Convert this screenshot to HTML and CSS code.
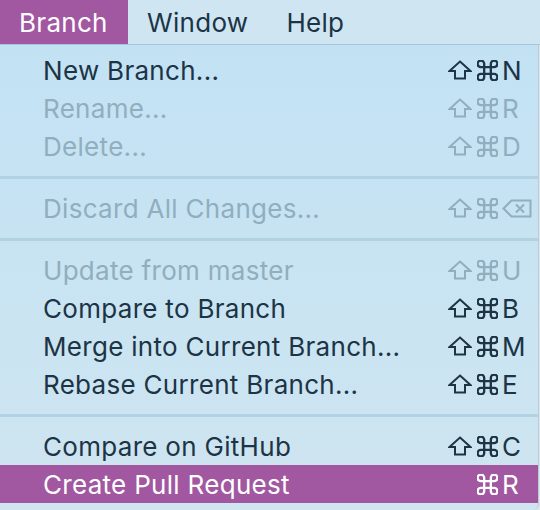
FILE: index.html
```html
<!DOCTYPE html>
<html>
<head>
<meta charset="utf-8">
<link rel="stylesheet" href="styles.css">
</head>
<body>
<div class="screen">
  <div class="menubar">
    <div class="title active">Branch</div>
    <div class="title">Window</div>
    <div class="title">Help</div>
  </div>
  <div class="menu">
    <div class="item">
      <span class="label">New Branch...</span>
      <span class="mods"><svg class="shift" viewBox="0 0 24 20"><path d="M12 1.5 L22.5 11 H17 V18.5 H7 V11 H1.5 Z"/></svg><svg class="cmd" viewBox="2.5 2.5 19 19"><path d="M15 6v12a3 3 0 1 0 3-3H6a3 3 0 1 0 3 3V6a3 3 0 1 0-3 3h12a3 3 0 1 0-3-3"/></svg></span>
      <span class="key">N</span>
    </div>
    <div class="item disabled">
      <span class="label">Rename...</span>
      <span class="mods"><svg class="shift" viewBox="0 0 24 20"><path d="M12 1.5 L22.5 11 H17 V18.5 H7 V11 H1.5 Z"/></svg><svg class="cmd" viewBox="2.5 2.5 19 19"><path d="M15 6v12a3 3 0 1 0 3-3H6a3 3 0 1 0 3 3V6a3 3 0 1 0-3 3h12a3 3 0 1 0-3-3"/></svg></span>
      <span class="key">R</span>
    </div>
    <div class="item disabled">
      <span class="label">Delete...</span>
      <span class="mods"><svg class="shift" viewBox="0 0 24 20"><path d="M12 1.5 L22.5 11 H17 V18.5 H7 V11 H1.5 Z"/></svg><svg class="cmd" viewBox="2.5 2.5 19 19"><path d="M15 6v12a3 3 0 1 0 3-3H6a3 3 0 1 0 3 3V6a3 3 0 1 0-3 3h12a3 3 0 1 0-3-3"/></svg></span>
      <span class="key">D</span>
    </div>
    <div class="sep"></div>
    <div class="item disabled">
      <span class="label">Discard All Changes...</span>
      <span class="mods"><svg class="shift" viewBox="0 0 24 20"><path d="M12 1.5 L22.5 11 H17 V18.5 H7 V11 H1.5 Z"/></svg><svg class="cmd" viewBox="2.5 2.5 19 19"><path d="M15 6v12a3 3 0 1 0 3-3H6a3 3 0 1 0 3 3V6a3 3 0 1 0-3 3h12a3 3 0 1 0-3-3"/></svg></span>
      <span class="key"><svg class="del" viewBox="0 0 30 19"><path d="M1.5 9.5 L9.5 1.5 H28.5 V17.5 H9.5 Z M14 5.5 L22 13.5 M22 5.5 L14 13.5"/></svg></span>
    </div>
    <div class="sep"></div>
    <div class="item disabled">
      <span class="label">Update from master</span>
      <span class="mods"><svg class="shift" viewBox="0 0 24 20"><path d="M12 1.5 L22.5 11 H17 V18.5 H7 V11 H1.5 Z"/></svg><svg class="cmd" viewBox="2.5 2.5 19 19"><path d="M15 6v12a3 3 0 1 0 3-3H6a3 3 0 1 0 3 3V6a3 3 0 1 0-3 3h12a3 3 0 1 0-3-3"/></svg></span>
      <span class="key">U</span>
    </div>
    <div class="item">
      <span class="label">Compare to Branch</span>
      <span class="mods"><svg class="shift" viewBox="0 0 24 20"><path d="M12 1.5 L22.5 11 H17 V18.5 H7 V11 H1.5 Z"/></svg><svg class="cmd" viewBox="2.5 2.5 19 19"><path d="M15 6v12a3 3 0 1 0 3-3H6a3 3 0 1 0 3 3V6a3 3 0 1 0-3 3h12a3 3 0 1 0-3-3"/></svg></span>
      <span class="key">B</span>
    </div>
    <div class="item">
      <span class="label">Merge into Current Branch...</span>
      <span class="mods"><svg class="shift" viewBox="0 0 24 20"><path d="M12 1.5 L22.5 11 H17 V18.5 H7 V11 H1.5 Z"/></svg><svg class="cmd" viewBox="2.5 2.5 19 19"><path d="M15 6v12a3 3 0 1 0 3-3H6a3 3 0 1 0 3 3V6a3 3 0 1 0-3 3h12a3 3 0 1 0-3-3"/></svg></span>
      <span class="key">M</span>
    </div>
    <div class="item">
      <span class="label">Rebase Current Branch...</span>
      <span class="mods"><svg class="shift" viewBox="0 0 24 20"><path d="M12 1.5 L22.5 11 H17 V18.5 H7 V11 H1.5 Z"/></svg><svg class="cmd" viewBox="2.5 2.5 19 19"><path d="M15 6v12a3 3 0 1 0 3-3H6a3 3 0 1 0 3 3V6a3 3 0 1 0-3 3h12a3 3 0 1 0-3-3"/></svg></span>
      <span class="key">E</span>
    </div>
    <div class="sep"></div>
    <div class="item">
      <span class="label">Compare on GitHub</span>
      <span class="mods"><svg class="shift" viewBox="0 0 24 20"><path d="M12 1.5 L22.5 11 H17 V18.5 H7 V11 H1.5 Z"/></svg><svg class="cmd" viewBox="2.5 2.5 19 19"><path d="M15 6v12a3 3 0 1 0 3-3H6a3 3 0 1 0 3 3V6a3 3 0 1 0-3 3h12a3 3 0 1 0-3-3"/></svg></span>
      <span class="key">C</span>
    </div>
    <div class="item selected">
      <span class="label">Create Pull Request</span>
      <span class="mods"><svg class="cmd" viewBox="2.5 2.5 19 19"><path d="M15 6v12a3 3 0 1 0 3-3H6a3 3 0 1 0 3 3V6a3 3 0 1 0-3 3h12a3 3 0 1 0-3-3"/></svg></span>
      <span class="key">R</span>
    </div>
  </div>
</div>
</body>
</html>
```

FILE: styles.css
```css
html, body {
  margin: 0;
  padding: 0;
}
body {
  width: 540px;
  height: 510px;
  overflow: hidden;
  background: #dfe6ea;
  font-family: "Inter", "Liberation Sans", sans-serif;
  font-size: 26px;
  letter-spacing: 0.3px;
}
.screen {
  width: 540px;
  height: 510px;
  display: flex;
  flex-direction: column;
}
.menubar {
  height: 44px;
  display: flex;
  align-items: stretch;
  background: #cfe6f2;
  border-bottom: 1px solid #a6c6d6;
  color: #1c3445;
}
.title {
  display: flex;
  align-items: center;
  padding: 0 19px;
}
.title.active {
  background: #a257a1;
  color: #ffffff;
  width: 128px;
  box-sizing: border-box;
}
.menu {
  flex: 1;
  margin-right: 1px;
  padding: 6px 0 4px;
  background: linear-gradient(#c2e2f4, #cfe5f0);
  border-bottom-right-radius: 6px;
  border-right: 1px solid #b9cdd8;
}
.item {
  height: 38px;
  display: flex;
  align-items: center;
  padding-left: 43px;
  color: #1c3445;
}
.item.disabled {
  color: #90aebe;
}
.item.selected {
  background: #a257a1;
  color: #ffffff;
}
.label {
  flex: 1;
  white-space: nowrap;
}
.mods {
  display: flex;
  align-items: center;
  gap: 5px;
}
.key {
  width: 36px;
  margin-left: 4px;
  display: flex;
  align-items: center;
}
svg {
  fill: none;
  stroke: currentColor;
  stroke-width: 2;
  stroke-linejoin: miter;
  display: block;
}
.shift {
  width: 24px;
  height: 20px;
}
.cmd {
  width: 21px;
  height: 21px;
  stroke-width: 2.1;
}
.del {
  width: 30px;
  height: 19px;
}
.sep {
  height: 24px;
  display: flex;
  align-items: center;
}
.sep::before {
  content: "";
  display: block;
  width: 100%;
  height: 3px;
  background: #b0d2e2;
}
```
